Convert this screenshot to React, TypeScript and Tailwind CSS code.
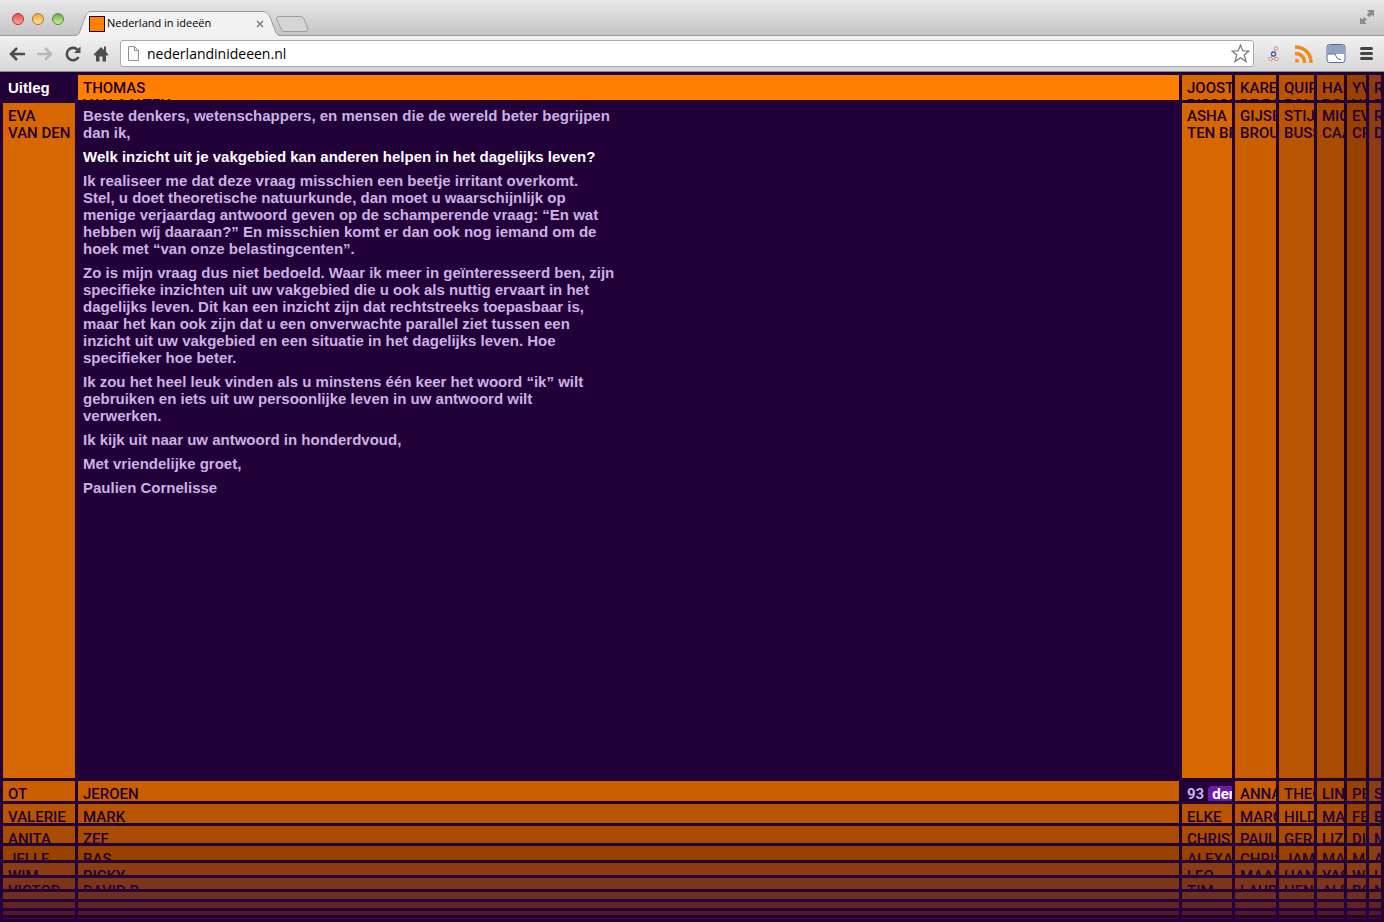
import React from "react";

interface Cell {
  first: string;
  last?: string;
}

interface RowData {
  level: number;
  cells: Cell[];
}

// Background per distance from the highlighted row or column
const SHADES = [
  "bg-[#ff7f00]",
  "bg-[#d76700]",
  "bg-[#c95f00]",
  "bg-[#b95500]",
  "bg-[#a94b00]",
  "bg-[#994200]",
  "bg-[#8b3c12]",
  "bg-[#7d351a]",
  "bg-[#702d20]",
  "bg-[#612324]",
  "bg-[#511a28]",
  "bg-[#40102c]",
];

const COLUMN_LEVELS = [1, 0, 1, 2, 3, 4, 5, 6];

const names = (...firsts: string[]): Cell[] => firsts.map((first) => ({ first }));

const ROWS: RowData[] = [
  { level: 2, cells: names("OT", "JEROEN", "93", "ANNA", "THEO", "LINDA", "PETER", "SIMON") },
  { level: 3, cells: names("VALERIE", "MARK", "ELKE", "MARC", "HILDE", "MAARTEN", "FEMKE", "BERT") },
  { level: 4, cells: names("ANITA", "ZEF", "CHRISTIEN", "PAUL", "GERARD", "LIZ", "DIRK", "MARIJN") },
  { level: 5, cells: names("JELLE", "BAS", "ALEXANDER", "CHRIS", "JAMES", "MARIA", "MEREL", "ARJEN") },
  { level: 6, cells: names("WIM", "RICKY", "LEO", "MAAIKE", "HANS", "YASMIN", "WOUTER", "LISA") },
  { level: 7, cells: names("VICTOR", "DAVID B.", "TIM", "LAURA", "HENK", "ALEX", "BOB", "NINA") },
  { level: 8, cells: names("", "", "", "", "", "", "", "") },
  { level: 9, cells: names("", "", "", "", "", "", "", "") },
  { level: 10, cells: names("", "", "", "", "", "", "", "") },
  { level: 11, cells: names("", "", "", "", "", "", "", "") },
];

const TOP_ROW: Cell[] = [
  { first: "THOMAS", last: "VAN AALTEN" },
  { first: "JOOST", last: "RISSOL" },
  { first: "KAREL", last: "DE BOER" },
  { first: "QUIRINE", last: "BOLS" },
  { first: "HANS", last: "BOS" },
  { first: "YVONNE", last: "VOS" },
  { first: "ROB", last: "DIJK" },
];

const SECOND_ROW: Cell[] = [
  { first: "ASHA", last: "TEN BROEKE" },
  { first: "GIJSBERT", last: "BROUWER" },
  { first: "STIJN", last: "BUSSELS" },
  { first: "MICHIEL", last: "CAALS" },
  { first: "EVA", last: "CRONE" },
  { first: "ROOS", last: "DIJK" },
];

const LETTER: { text: string; strong?: boolean }[] = [
  {
    text: "Beste denkers, wetenschappers, en mensen die de wereld beter begrijpen\ndan ik,",
  },
  {
    text: "Welk inzicht uit je vakgebied kan anderen helpen in het dagelijks leven?",
    strong: true,
  },
  {
    text: "Ik realiseer me dat deze vraag misschien een beetje irritant overkomt.\nStel, u doet theoretische natuurkunde, dan moet u waarschijnlijk op\nmenige verjaardag antwoord geven op de schamperende vraag: “En wat\nhebben wíj daaraan?” En misschien komt er dan ook nog iemand om de\nhoek met “van onze belastingcenten”.",
  },
  {
    text: "Zo is mijn vraag dus niet bedoeld. Waar ik meer in geïnteresseerd ben, zijn\nspecifieke inzichten uit uw vakgebied die u ook als nuttig ervaart in het\ndagelijks leven. Dit kan een inzicht zijn dat rechtstreeks toepasbaar is,\nmaar het kan ook zijn dat u een onverwachte parallel ziet tussen een\ninzicht uit uw vakgebied en een situatie in het dagelijks leven. Hoe\nspecifieker hoe beter.",
  },
  {
    text: "Ik zou het heel leuk vinden als u minstens één keer het woord “ik” wilt\ngebruiken en iets uit uw persoonlijke leven in uw antwoord wilt\nverwerken.",
  },
  { text: "Ik kijk uit naar uw antwoord in honderdvoud," },
  { text: "Met vriendelijke groet," },
  { text: "Paulien Cornelisse" },
];

const NameCell: React.FC<{ cell: Cell; level: number }> = ({ cell, level }) => {
  if (!cell.first) {
    return <div className={SHADES[level]} />;
  }
  return (
    <a
      href="#"
      className={`block min-h-0 min-w-0 overflow-hidden whitespace-nowrap pl-[5px] pt-[5px] font-['Roboto',sans-serif] text-[15px] font-medium leading-[17px] text-[#220038] ${SHADES[level]}`}
    >
      {cell.first}
      {cell.last && (
        <>
          <br />
          {cell.last}
        </>
      )}
    </a>
  );
};

const CounterCell = () => (
  <a
    href="#"
    className="flex min-h-0 min-w-0 items-start gap-1 overflow-hidden whitespace-nowrap pl-[5px] pt-[5px] font-['Roboto',sans-serif] text-[15px] font-bold leading-[17px] text-[#cdb0e6]"
  >
    93
    <span className="rounded-t-sm bg-[#701ba8] px-1 text-white">denkers</span>
  </a>
);

const Letter = () => (
  <main className="min-w-0 space-y-[7px] pl-[5px] pt-1 font-['Liberation_Sans',sans-serif] text-[15px] font-bold leading-[17px] text-[#cdb0e6]">
    {LETTER.map((paragraph) => (
      <p
        key={paragraph.text}
        className={`whitespace-pre-line ${paragraph.strong ? "text-white" : ""}`}
      >
        {paragraph.text}
      </p>
    ))}
  </main>
);

const TabStrip = () => (
  <div className="flex h-9 items-end bg-gradient-to-b from-[#e8e8e8] to-[#c4c4c4] pr-2.5 shadow-[inset_0_-1px_0_#9a9a9a]">
    <div className="flex gap-2 pb-[11px] pl-3">
      <button
        aria-label="Sluiten"
        className="size-3 rounded-full border border-[#a33a35] bg-gradient-to-b from-[#e0504c] to-[#ffa49c]"
      />
      <button
        aria-label="Minimaliseren"
        className="size-3 rounded-full border border-[#a9772c] bg-gradient-to-b from-[#eda63c] to-[#ffe591]"
      />
      <button
        aria-label="Vergroten"
        className="size-3 rounded-full border border-[#55893c] bg-gradient-to-b from-[#6db04c] to-[#c8f0a0]"
      />
    </div>
    <div className="relative ml-2.5 flex h-[25px] w-[206px] items-center pl-[15px] pr-4">
      <svg className="absolute inset-0" width="206" height="25" viewBox="0 0 206 25" fill="none">
        <path
          d="M0 24.5C4 24.5 5 23 6 20L11 6C13 2 14 .5 17 .5H189C192 .5 194 2 196 6L201 19C202 22 203 24.500 206 24.500V26H0Z"
          fill="#f1f1f1"
          stroke="#9a9a9a"
        />
      </svg>
      <span className="relative size-4 border border-[#220038] bg-[#ff7f00]" />
      <span className="relative ml-0.5 flex-1 whitespace-nowrap font-['Open_Sans',sans-serif] text-[11px] text-black">
        Nederland in ideeën
      </span>
      <button aria-label="Tabblad sluiten" className="relative text-[#777]">
        <svg width="8" height="8" viewBox="0 0 8 8" stroke="currentColor" strokeWidth="1.4">
          <path d="M1 1l6 6M7 1l-6 6" />
        </svg>
      </button>
    </div>
    <button aria-label="Nieuw tabblad" className="-ml-1 mb-1">
      <svg width="33" height="16" viewBox="0 0 33 16" fill="none">
        <path
          d="M3 .5H23C26 .5 27 1 28 3L31.500 12C32.500 14.500 32 15.500 29 15.500H9C7 15.500 6 14.500 5 12.500L1 4C0 2 1 .5 3 .5Z"
          fill="#d5d5d5"
          stroke="#9c9c9c"
        />
      </svg>
    </button>
    <button aria-label="Volledig scherm" className="mb-3 ml-auto text-[#8b8b8b]">
      <svg width="14" height="14" viewBox="0 0 14 14" fill="currentColor">
        <path d="M7 0H14V7L11.800 4.800 9.300 7.300 6.700 4.700 9.200 2.200ZM0 7.500L2.200 9.500 4.500 7.200 6.800 9.500 4.500 11.800 6.500 14H0Z" />
      </svg>
    </button>
  </div>
);

const Toolbar = () => (
  <div className="flex h-9 items-center border-b border-[#8c8c8c] bg-gradient-to-b from-[#f1f1f1] to-[#d7d7d7] pl-[9px] pr-[11px]">
    <div className="flex items-center gap-3 text-[#4d4d4d]">
      <button aria-label="Vorige">
        <svg width="16" height="14" viewBox="0 0 16 14" fill="none" stroke="currentColor" strokeWidth="2.500">
          <path d="M16 7H2M8 1L2 7l6 6" />
        </svg>
      </button>
      <button aria-label="Volgende" className="text-[#b8b8b8]">
        <svg width="16" height="14" viewBox="0 0 16 14" fill="none" stroke="currentColor" strokeWidth="2.500">
          <path d="M0 7H14M8 1l6 6-6 6" />
        </svg>
      </button>
      <button aria-label="Vernieuwen">
        <svg width="16" height="16" viewBox="0 0 16 16" fill="none">
          <path d="M13.500 11A6.200 6.200 0 1 1 12.500 3.700" stroke="currentColor" strokeWidth="2.600" />
          <path d="M15.500 .5V7H9Z" fill="currentColor" />
        </svg>
      </button>
      <button aria-label="Startpagina">
        <svg width="16" height="16" viewBox="0 0 16 16" fill="currentColor">
          <path d="M8 1L.5 8.500 1.500 9.500H3V15.500H6.500V10.500H9.500V15.500H13V9.500H14.500L15.500 8.500 13 6V.5H11V4Z" />
        </svg>
      </button>
    </div>
    <div className="ml-[11px] flex h-[27px] min-w-0 flex-1 items-center rounded-[3px] border border-[#a9a9a9] bg-white pl-1.5 pr-[3px]">
      <svg width="13" height="16" viewBox="0 0 13 16" fill="#fafafa" stroke="#8f8f8f">
        <path d="M1.500 .5H7.500L11.500 4.500V14.500H1.500ZM7.500 .5V4.500H11.500" />
      </svg>
      <input
        aria-label="Adres"
        defaultValue="nederlandinideeen.nl"
        className="ml-[7px] min-w-0 flex-1 bg-transparent font-['Open_Sans',sans-serif] text-[14px] text-black outline-none"
      />
      <button aria-label="Bladwijzer">
        <svg width="19" height="19" viewBox="0 0 19 19" fill="#fff" stroke="#777" strokeWidth="1.200">
          <path d="M9.500 1L11.800 7H18L13.200 11 15 17.500 9.500 13.800 4 17.500 5.800 11 1 7H7.200Z" />
        </svg>
      </button>
    </div>
    <div className="flex items-center">
      <button aria-label="Netwerk" className="ml-3.5">
        <svg width="12" height="16" viewBox="0 0 12 16" fill="#fff">
          <path d="M8 3L5 8 2.500 13M5 8L8 13M3 13H8" stroke="#9aa3b5" />
          <circle cx="8" cy="2.500" r="1.700" stroke="#d77" />
          <circle cx="5.500" cy="8" r="2" stroke="#36a" strokeWidth="1.500" />
          <circle cx="2.500" cy="13" r="1.700" stroke="#d77" />
          <circle cx="8.500" cy="13" r="1.700" stroke="#d77" />
        </svg>
      </button>
      <button aria-label="RSS" className="ml-[15px]">
        <svg width="19" height="18" viewBox="0 0 19 18" fill="none" stroke="#ee8b1b" strokeWidth="3.500">
          <path d="M0 2C9 2 16 8 16 18M0 8.500C6 8.500 9.500 12 9.500 18" />
          <circle cx="2" cy="15.800" r="2" fill="#ee8b1b" stroke="none" />
        </svg>
      </button>
      <button aria-label="Venster" className="ml-3">
        <svg width="20" height="19" viewBox="0 0 20 19">
          <rect x="1" y=".5" width="18" height="18" rx="2.500" fill="#fff" stroke="#596b91" />
          <path d="M1.500 3Q1.500 1 3.500 1H16.500Q18.500 1 18.500 3V10H1.500Z" fill="#92a2c3" />
          <path d="M1.500 10H9L11 14Q12 15.500 15 15.500" fill="none" stroke="#596b91" />
        </svg>
      </button>
      <button aria-label="Menu" className="ml-3.5 flex flex-col gap-0.5">
        <span className="h-[3px] w-[13px] rounded-full bg-[#444]" />
        <span className="h-[3px] w-[13px] rounded-full bg-[#444]" />
        <span className="h-[3px] w-[13px] rounded-full bg-[#444]" />
      </button>
    </div>
  </div>
);

export default function App() {
  return (
    <div className="flex min-h-screen flex-col bg-[#220038]">
      <header>
        <TabStrip />
        <Toolbar />
      </header>

      <div className="grid flex-1 grid-cols-[72px_minmax(0,1fr)_50px_41px_35px_27px_19px_12px] grid-rows-[25px_minmax(max-content,1fr)_20px_19px_17px_14px_12px_11px_7px_6px_4px_1px] gap-[3px] p-[3px]">
        <a
          href="#"
          className="pl-[5px] pt-1 font-['Liberation_Sans',sans-serif] text-[15px] font-bold leading-[17px] text-white"
        >
          Uitleg
        </a>
        {TOP_ROW.map((cell, index) => (
          <NameCell key={cell.first} cell={cell} level={COLUMN_LEVELS[index + 1]} />
        ))}

        <NameCell cell={{ first: "EVA", last: "VAN DEN BROEK" }} level={1} />
        <Letter />
        {SECOND_ROW.map((cell, index) => (
          <NameCell key={cell.first} cell={cell} level={COLUMN_LEVELS[index + 2]} />
        ))}

        {ROWS.map((row) =>
          row.cells.map((cell, index) =>
            cell.first === "93" ? (
              <CounterCell key={`${row.level}-${index}`} />
            ) : (
              <NameCell
                key={`${row.level}-${index}`}
                cell={cell}
                level={Math.max(row.level, COLUMN_LEVELS[index])}
              />
            ),
          ),
        )}
      </div>
    </div>
  );
}
